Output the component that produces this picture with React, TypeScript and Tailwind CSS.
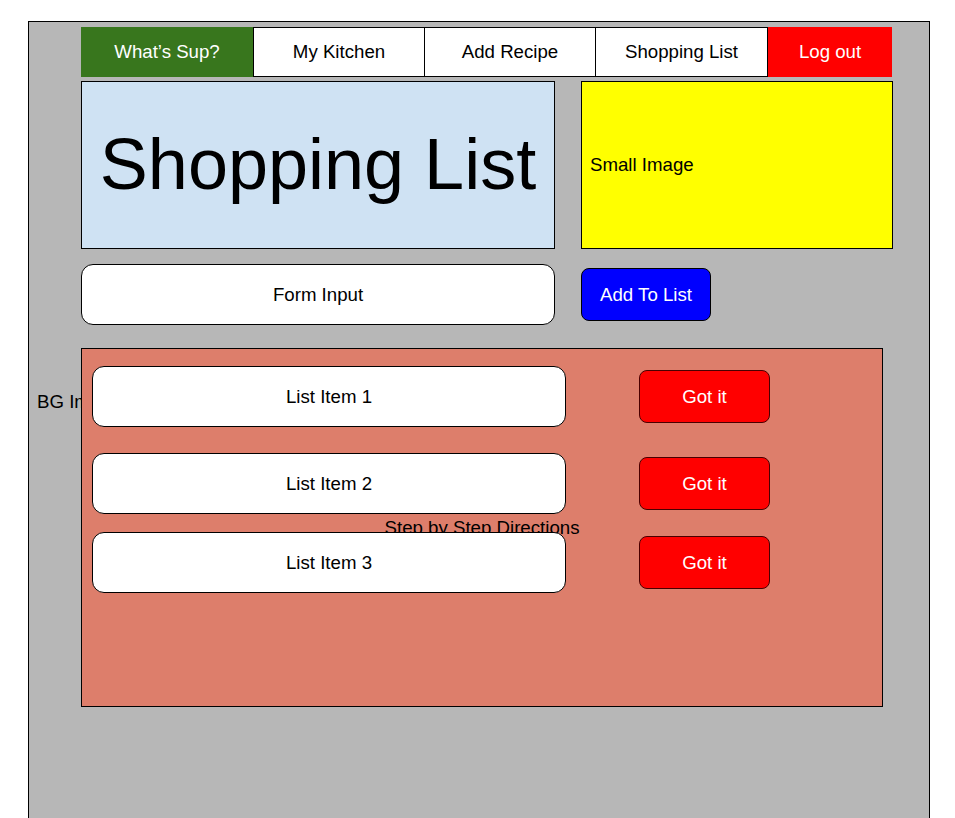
import React from 'react'

const navItems = [
    { label: "What’s Sup?", cls: 'w-[172px] bg-[#38761d] text-white' },
    { label: 'My Kitchen', cls: 'w-[172px] bg-white text-black border-y border-x border-black' },
    { label: 'Add Recipe', cls: 'w-[171px] bg-white text-black border-y border-r border-black' },
    { label: 'Shopping List', cls: 'w-[172px] bg-white text-black border-y border-r border-black' },
    { label: 'Log out', cls: 'w-[124px] bg-[#ff0000] text-white' },
]

const listItems = [
    { label: 'List Item 1', mt: 'mt-[17px]' },
    { label: 'List Item 2', mt: 'mt-[26px]' },
    { label: 'List Item 3', mt: 'mt-[18px]' },
]

export default function App() {
    return (
        <div className="min-h-screen bg-white pt-[21px] pl-[28px] font-['Liberation_Sans',Arial,sans-serif] text-[18.67px] overflow-hidden">
            <div className="relative w-[902px] h-[820px] bg-[#b7b7b7] border-x border-t border-black pl-[52px] pt-[5px]">
                {/* BG label, sits behind the list panel */}
                <span className="absolute left-[8px] top-[366px] text-black">BG Image</span>

                {/* Top nav */}
                <nav className="flex h-[50px] w-[811px]">
                    {navItems.map((item) => (
                        <div key={item.label} className={`flex items-center justify-center ${item.cls}`}>
                            {item.label}
                        </div>
                    ))}
                </nav>

                {/* Header row */}
                <div className="flex gap-[26px] mt-[4px]">
                    <div className="w-[474px] h-[168px] bg-[#cfe2f3] border border-black flex items-center justify-center">
                        <h1 className="text-[72px] leading-none text-black pb-[2px]">Shopping List</h1>
                    </div>
                    <div className="w-[312px] h-[168px] bg-[#ffff00] border border-black flex items-center pl-[8px] text-black">
                        Small Image
                    </div>
                </div>

                {/* Form row */}
                <div className="flex items-center gap-[26px] mt-[15px]">
                    <div className="w-[474px] h-[61px] bg-white border border-black rounded-[12px] flex items-center justify-center text-black">
                        Form Input
                    </div>
                    <button className="w-[130px] h-[53px] bg-[#0000ff] border border-black rounded-[8px] text-white">
                        Add To List
                    </button>
                </div>

                {/* List panel */}
                <div className="relative z-10 mt-[23px] w-[802px] h-[359px] bg-[#dd7e6b] border border-black pl-[10px]">
                    <span className="absolute inset-0 flex items-center justify-center text-black pt-[1px]">
                        Step by Step Directions
                    </span>
                    {listItems.map((item) => (
                        <div key={item.label} className={`relative flex items-center gap-[73px] ${item.mt}`}>
                            <div className="w-[474px] h-[61px] bg-white border border-black rounded-[12px] flex items-center justify-center text-black">
                                {item.label}
                            </div>
                            <button className="w-[131px] h-[53px] bg-[#ff0000] border border-[#4a0000] rounded-[8px] text-white">
                                Got it
                            </button>
                        </div>
                    ))}
                </div>
            </div>
        </div>
    )
}
